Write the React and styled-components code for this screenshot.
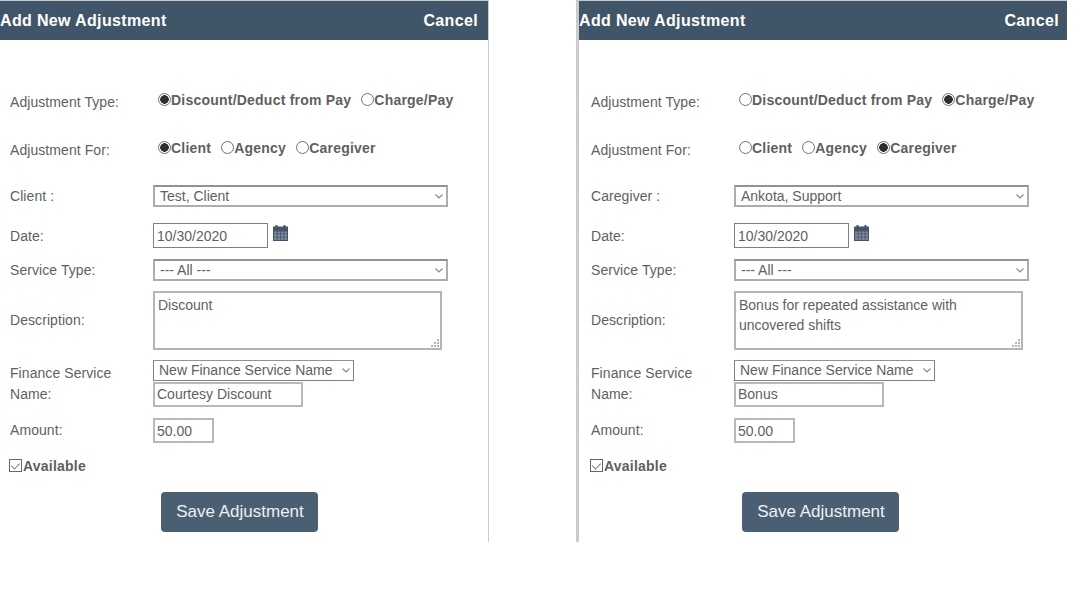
import React from 'react';
import styled, { createGlobalStyle } from 'styled-components';

const chevron = encodeURIComponent(
  '<svg xmlns="http://www.w3.org/2000/svg" width="8" height="5"><path d="M.5.500l3.500 3.500 3.500-3.500" fill="none" stroke="#888" stroke-width="1.100"/></svg>'
);

const Global = createGlobalStyle`
  html, body { margin: 0; padding: 0; background: #fff; }
  body { font-family: "Liberation Sans", Arial, sans-serif; font-size: 14px; color: #5f5f5f; }
`;

const Page = styled.div`
  display: flex;
  align-items: flex-start;
  width: 1084px;
  height: 601px;
  overflow: hidden;
`;

const Panel = styled.section`
  width: 488px;
  flex: none;
  height: 541px;
  border-top: 1px solid #c8c8c8;
  border-right: ${p => p.$side === 'left' ? '1px solid #ccc' : 'none'};
  border-left: ${p => p.$side === 'right' ? '3px solid #ccc' : 'none'};
  margin-left: ${p => p.$side === 'right' ? '87px' : '0'};
`;

const Header = styled.header`
  display: flex;
  justify-content: space-between;
  align-items: center;
  height: 39px;
  padding-right: ${p => p.$side === 'right' ? 8 : 10}px;
  background: #415569;
  color: #fff;
  font-size: 16px;
  font-weight: bold;
  letter-spacing: 0.35px;
`;

const Form = styled.form`
  display: flex;
  flex-direction: column;
  padding-top: 50px;
  padding-left: ${p => p.$side === 'right' ? 2 : 0}px;
`;

const Row = styled.div`
  display: flex;
  align-items: ${p => p.$align || 'center'};
  margin-top: ${p => p.$mt || 0}px;
  padding-left: 10px;
  min-height: ${p => p.$h || 0}px;
`;

const Label = styled.label`
  width: 143px;
  flex: none;
  padding-top: ${p => p.$drop || 0}px;
  line-height: 21px;
  letter-spacing: 0.07px;
`;

const Options = styled.div`
  display: flex;
  align-items: center;
  margin: -4px 0 0 5px;
`;

const Choice = styled.label`
  display: flex;
  align-items: center;
  margin-right: 10px;
  font-weight: bold;
  letter-spacing: 0.22px;
`;

const Radio = styled.input.attrs({ type: 'radio' })`
  appearance: none;
  box-sizing: border-box;
  width: 13px;
  height: 13px;
  margin: -2px 0 0 0;
  border: 1px solid #707070;
  border-radius: 50%;
  background: #fff;
  &:checked {
    background: radial-gradient(circle, #2e2e2e 0 4px, #fff 4.6px);
  }
`;

const Select = styled.select`
  appearance: none;
  box-sizing: border-box;
  width: ${p => p.$w}px;
  height: ${p => p.$h}px;
  margin: 0;
  padding: 0 0 ${p => p.$dark ? 1 : 0}px 5px;
  border: ${p => p.$dark ? '1px solid #808080' : '2px solid #adadad'};
  border-top-color: #929292;
  border-radius: 0;
  background: #fff url("data:image/svg+xml,${chevron}") no-repeat right 3px center;
  font: 14px "Liberation Sans", Arial, sans-serif;
  color: #5f5f5f;
`;

const TextInput = styled.input`
  box-sizing: border-box;
  width: ${p => p.$w}px;
  height: 25px;
  margin: 0;
  padding: 0 ${p => p.$dark ? 3 : 2}px ${p => p.$lift ? 2 : 0}px;
  border: ${p => p.$dark ? '1px solid #808080' : '2px solid #b8b8b8'};
  border-radius: 0;
  outline: none;
  font: 14px "Liberation Sans", Arial, sans-serif;
  color: #5f5f5f;
`;

const AreaWrap = styled.div`
  position: relative;
  width: 289px;
  height: 59px;
`;

const TextArea = styled.textarea`
  display: block;
  box-sizing: border-box;
  width: 100%;
  height: 100%;
  margin: 0;
  padding: 2px 3px;
  border: 2px solid #b4b4b4;
  border-radius: 0;
  outline: none;
  resize: none;
  font: 14px/20px "Liberation Sans", Arial, sans-serif;
  color: #5f5f5f;
`;

const Grip = styled.svg`
  position: absolute;
  right: 2px;
  bottom: 2px;
  width: 10px;
  height: 10px;
`;

const Stack = styled.div`
  display: flex;
  flex-direction: column;
  align-items: flex-start;
  gap: 1px;
`;

const CalendarIcon = styled.svg`
  align-self: flex-start;
  width: 15px;
  height: 16px;
  margin: 2px 0 0 5px;
`;

const Check = styled.input.attrs({ type: 'checkbox' })`
  appearance: none;
  box-sizing: border-box;
  position: relative;
  width: 13px;
  height: 13px;
  margin: -2px 1px 0 -1px;
  border: 1px solid #666;
  background: #fff;
  &::after {
    content: '';
    position: absolute;
    left: 3px;
    top: 1px;
    width: 4px;
    height: 7px;
    border: solid #777;
    border-width: 0 1px 1px 0;
    transform: rotate(45deg);
  }
`;

const SaveButton = styled.button`
  align-self: flex-start;
  width: 157px;
  height: 40px;
  margin: 18px 0 0 161px;
  padding: 0 0 0 1px;
  border: none;
  border-radius: 4px;
  background: #4b5f72;
  color: #eef0f2;
  font: 17px "Liberation Sans", Arial, sans-serif;
`;

const Calendar = () => (
  <CalendarIcon viewBox="0 0 15 16">
    <path fill="#46546a" d="M0 1.500h2.500V0h2v1.500h6V0h2v1.500H15V16H0z" />
    <path
      fill="#7f8b9b"
      d="M1 6.500h2.800v2H1zm3.600 0h2.600v2H4.600zm3.400 0h2.600v2H8zm3.400 0H14v2h-2.600zM1 9.300h2.800v2.400H1zm3.600 0h2.600v2.400H4.600zm3.400 0h2.600v2.400H8zm3.400 0H14v2.400h-2.600zM1 12.500h2.800V15H1zm3.600 0h2.600V15H4.600zm3.400 0h2.600V15H8zm3.400 0H14V15h-2.600z"
    />
  </CalendarIcon>
);

const Resizer = () => (
  <Grip viewBox="0 0 10 10">
    <path fill="#b5b5b5" d="M7 1h2v2H7zM7 4h2v2H7zM7 7h2v2H7zM4 4h2v2H4zM4 7h2v2H4zM1 7h2v2H1z" />
  </Grip>
);

const RadioGroup = ({ name, items, checked }) => (
  <Options>
    {items.map(item => (
      <Choice key={item}>
        <Radio name={name} defaultChecked={item === checked} />
        {item}
      </Choice>
    ))}
  </Options>
);

const AdjustmentForm = ({ side, id, type, target, personLabel, person, description, service }) => (
  <Panel $side={side}>
    <Header $side={side}>
      <span>Add New Adjustment</span>
      <span>Cancel</span>
    </Header>
    <Form $side={side}>
      <Row $h={24}>
        <Label>Adjustment Type:</Label>
        <RadioGroup name={id + 'type'} items={['Discount/Deduct from Pay', 'Charge/Pay']} checked={type} />
      </Row>
      <Row $h={24} $mt={24}>
        <Label>Adjustment For:</Label>
        <RadioGroup name={id + 'for'} items={['Client', 'Agency', 'Caregiver']} checked={target} />
      </Row>
      <Row $mt={23}>
        <Label>{personLabel}</Label>
        <Select $w={295} $h={22} defaultValue={person}>
          <option>{person}</option>
        </Select>
      </Row>
      <Row $mt={16}>
        <Label $drop={2}>Date:</Label>
        <TextInput $w={115} $dark defaultValue="10/30/2020" />
        <Calendar />
      </Row>
      <Row $mt={11}>
        <Label>Service Type:</Label>
        <Select $w={295} $h={22}>
          <option>--- All ---</option>
        </Select>
      </Row>
      <Row $mt={10}>
        <Label>Description:</Label>
        <AreaWrap>
          <TextArea defaultValue={description} />
          <Resizer />
        </AreaWrap>
      </Row>
      <Row $mt={10} $align="flex-start">
        <Label as="div" $drop={3}>Finance Service<br />Name:</Label>
        <Stack>
          <Select $w={201} $h={21} $dark>
            <option>New Finance Service Name</option>
          </Select>
          <TextInput $w={150} $lift defaultValue={service} />
        </Stack>
      </Row>
      <Row $mt={11}>
        <Label>Amount:</Label>
        <TextInput $w={61} defaultValue="50.00" />
      </Row>
      <Row $mt={15} $h={16}>
        <Choice>
          <Check defaultChecked />
          Available
        </Choice>
      </Row>
      <SaveButton type="button">Save Adjustment</SaveButton>
    </Form>
  </Panel>
);

export default function App() {
  return (
    <Page>
      <Global />
      <AdjustmentForm
        side="left"
        id="a"
        type="Discount/Deduct from Pay"
        target="Client"
        personLabel="Client :"
        person="Test, Client"
        description="Discount"
        service="Courtesy Discount"
      />
      <AdjustmentForm
        side="right"
        id="b"
        type="Charge/Pay"
        target="Caregiver"
        personLabel="Caregiver :"
        person="Ankota, Support"
        description="Bonus for repeated assistance with uncovered shifts"
        service="Bonus"
      />
    </Page>
  );
}
